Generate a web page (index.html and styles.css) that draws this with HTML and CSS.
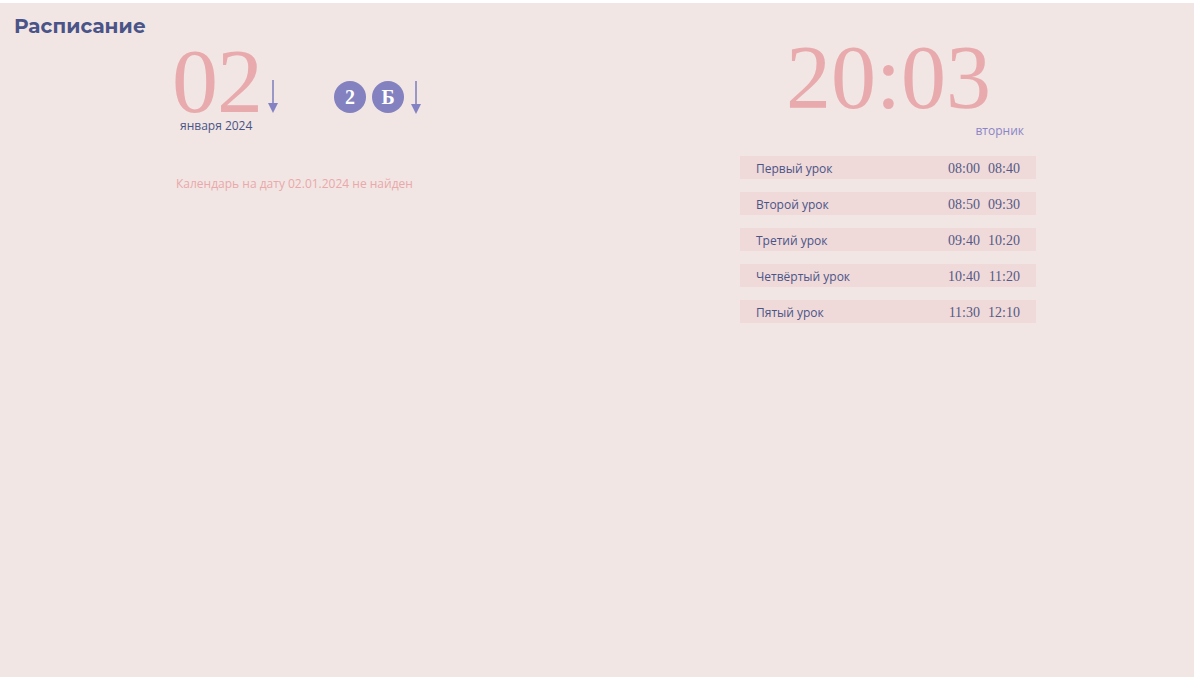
FILE: index.html
```html
<!DOCTYPE html>
<html lang="ru">
<head>
<meta charset="utf-8">
<link rel="stylesheet" href="styles.css">
</head>
<body>
<div class="page">
  <h1 class="title">Расписание</h1>
  <div class="main">
    <section class="left">
      <div class="date-row">
        <div class="date">
          <div class="day-line">
            <span class="day">02</span>
            <svg class="arrow" width="10" height="33" viewBox="0 0 10 33"><path d="M5 0 V30" stroke="#8482c2" stroke-width="1.6"/><path d="M0 23 L5 33 L10 23 Z" fill="#8482c2"/></svg>
          </div>
          <div class="month">января 2024</div>
        </div>
        <div class="klass">
          <span class="circle">2</span>
          <span class="circle">Б</span>
          <svg class="arrow" width="10" height="33" viewBox="0 0 10 33"><path d="M5 0 V30" stroke="#8482c2" stroke-width="1.6"/><path d="M0 23 L5 33 L10 23 Z" fill="#8482c2"/></svg>
        </div>
      </div>
      <p class="notfound">Календарь на дату 02.01.2024 не найден</p>
    </section>
    <section class="right">
      <div class="clock">20:03</div>
      <div class="weekday">вторник</div>
      <ul class="lessons">
        <li class="lesson"><span class="name">Первый урок</span><span class="t">08:00</span><span class="t">08:40</span></li>
        <li class="lesson"><span class="name">Второй урок</span><span class="t">08:50</span><span class="t">09:30</span></li>
        <li class="lesson"><span class="name">Третий урок</span><span class="t">09:40</span><span class="t">10:20</span></li>
        <li class="lesson"><span class="name">Четвёртый урок</span><span class="t">10:40</span><span class="t">11:20</span></li>
        <li class="lesson"><span class="name">Пятый урок</span><span class="t">11:30</span><span class="t">12:10</span></li>
      </ul>
    </section>
  </div>
</div>
</body>
</html>
```
FILE: styles.css
```css
html, body {
  margin: 0;
  padding: 0;
  background: #ffffff;
}
.page {
  box-sizing: border-box;
  margin-top: 3px;
  width: 1194px;
  height: 674px;
  background: #f1e6e3;
  padding: 12px 0 0 14px;
  font-family: "Open Sans", "Noto Sans", sans-serif;
}
.title {
  margin: 0;
  font-family: "Montserrat", "Open Sans", sans-serif;
  font-weight: 700;
  font-size: 20px;
  line-height: 22px;
  color: #4a5488;
  letter-spacing: 0.1px;
}
.main {
  display: flex;
}
.left {
  margin-left: 158px;
  width: 360px;
}
.date-row {
  display: flex;
  align-items: flex-start;
}
.date {
  display: flex;
  flex-direction: column;
}
.day-line {
  display: flex;
  align-items: flex-end;
  height: 78px;
}
.day {
  font-family: "Liberation Serif", serif;
  font-size: 92px;
  line-height: 68px;
  height: 68px;
  color: #e8aaad;
  letter-spacing: -1px;
}
.day-line .arrow {
  margin-left: 6px;
  margin-bottom: 2px;
}
.month {
  margin-left: 8px;
  margin-top: 3px;
  font-size: 12px;
  line-height: 16px;
  color: #4a5488;
}
.klass {
  display: flex;
  align-items: flex-end;
  gap: 6px;
  margin-left: 56px;
  margin-top: 44px;
}
.circle {
  width: 32px;
  height: 32px;
  margin-bottom: 1px;
  border-radius: 50%;
  background: #8381bf;
  color: #ffffff;
  font-family: "Liberation Serif", serif;
  font-weight: 700;
  font-size: 20px;
  display: flex;
  align-items: center;
  justify-content: center;
}
.klass .arrow {
  margin-left: 1px;
  margin-bottom: 0;
}
.notfound {
  margin: 41px 0 0 4px;
  font-size: 12px;
  color: #eaa8ab;
}
.right {
  margin-left: 208px;
  width: 296px;
  display: flex;
  flex-direction: column;
}
.clock {
  text-align: center;
  font-family: "Liberation Serif", serif;
  font-size: 90px;
  line-height: 82px;
  color: #e8aaad;
  margin-top: 0;
  padding-left: 1px;
}
.weekday {
  text-align: right;
  padding-right: 12px;
  font-size: 12px;
  line-height: 16px;
  margin-top: 4px;
  color: #8a85c8;
}
.lessons {
  list-style: none;
  margin: 17px 0 0 0;
  padding: 0;
  display: flex;
  flex-direction: column;
  gap: 13px;
}
.lesson {
  display: flex;
  align-items: center;
  box-sizing: border-box;
  height: 23px;
  padding: 2px 16px 0 16px;
  background: #efd9d9;
  color: #4a5488;
  font-size: 12px;
}
.name {
  flex: 1;
}
.t {
  width: 32px;
  text-align: right;
  font-family: "Liberation Serif", serif;
  font-size: 14px;
  color: #555a88;
}
.t + .t {
  margin-left: 8px;
}
```
